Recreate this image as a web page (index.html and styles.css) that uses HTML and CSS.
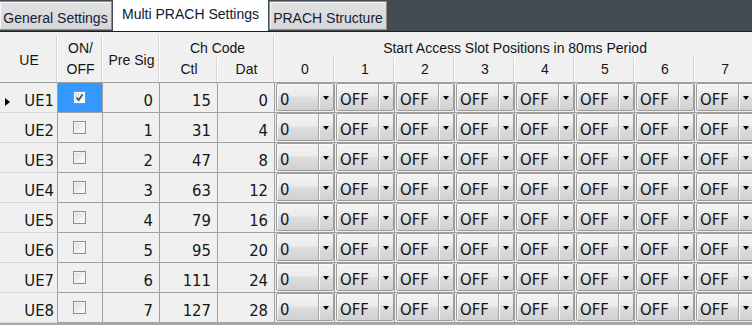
FILE: index.html
```html
<!DOCTYPE html>
<html lang="en">

<head>
  <meta charset="UTF-8">
  <title>Multi PRACH Settings</title>
  <link rel="stylesheet" href="styles.css">
</head>

<body>
  <div class="tabs">
    <div class="tab tab-general">General Settings</div>
    <div class="tab tab-multi active">Multi PRACH Settings</div>
    <div class="tab tab-struct">PRACH Structure</div>
  </div>
  <div class="rule"></div>

  <div class="grid">
    <table class="prach">
      <colgroup>
        <col class="c-ue">
        <col class="c-on">
        <col class="c-sig">
        <col class="c-ctl">
        <col class="c-dat">
        <col class="c-slot"><col class="c-slot"><col class="c-slot"><col class="c-slot">
        <col class="c-slot"><col class="c-slot"><col class="c-slot"><col class="c-slot">
      </colgroup>
      <thead>
        <tr class="h1">
          <th rowspan="2" class="tall th-ue">UE</th>
          <th rowspan="2" class="tall th-on">ON/<br>OFF</th>
          <th rowspan="2" class="tall th-sig">Pre Sig</th>
          <th colspan="2">Ch Code</th>
          <th colspan="8" class="th-slots">Start Access Slot Positions in 80ms Period</th>
        </tr>
        <tr class="h2">
          <th>Ctl</th>
          <th>Dat</th>
          <th>0</th>
          <th>1</th>
          <th>2</th>
          <th>3</th>
          <th>4</th>
          <th>5</th>
          <th>6</th>
          <th>7</th>
        </tr>
      </thead>
      <tbody id="ueBody">
        <!-- rows are built below -->
      </tbody>
    </table>
  </div>

  <script>
    const ues = [];
    for (let i = 0; i < 8; i++) {
      ues.push({
        name: "UE" + (i + 1),
        on: i === 0,
        preSig: i,
        ctl: 15 + i * 16,
        dat: i * 4,
        slots: ["0", "OFF", "OFF", "OFF", "OFF", "OFF", "OFF", "OFF"]
      });
    }

    function checkbox(on) {
      if (!on) return `<span class="cb"></span>`;
      return `<span class="cb"><svg width="11" height="11" viewBox="0 0 11 11"><path d="M2.5 5.5 L4.6 8 L8.6 2.4" fill="none" stroke="#3c4f8c" stroke-width="1.7"/></svg></span>`;
    }

    function renderRows() {
      const body = document.getElementById("ueBody");
      body.innerHTML = "";

      ues.forEach((ue, idx) => {
        const row = document.createElement("tr");
        let cells = `
          <td class="rowhead"><div class="rh"><span class="${idx === 0 ? "mark" : ""}"></span><span>${ue.name}</span></div></td>
          <td class="onoff${idx === 0 ? " selected" : ""}">${checkbox(ue.on)}</td>
          <td>${ue.preSig}</td>
          <td>${ue.ctl}</td>
          <td>${ue.dat}</td>`;
        ue.slots.forEach(slot => {
          cells += `<td class="slot"><div class="combo"><span class="val">${slot}</span><span class="drop"><i></i></span></div></td>`;
        });
        row.innerHTML = cells;
        body.appendChild(row);
      });
    }

    renderRows();
  </script>
</body>

</html>
```

FILE: styles.css
```css
body {
  margin: 0;
  width: 752px;
  height: 325px;
  overflow: hidden;
  background-color: #a9a9a9;
  font-family: "Liberation Sans", Arial, sans-serif;
}

/* tab strip */
.tabs {
  display: flex;
  align-items: flex-start;
  height: 31px;
  background-color: #434c52;
}

.tab {
  box-sizing: border-box;
  height: 29px;
  margin-top: 1px;
  padding-top: 8px;
  font-size: 14px;
  line-height: 16px;
  white-space: nowrap;
  text-align: center;
  color: #14213b;
  background: linear-gradient(#e2e2e2, #d6d6d6);
  border: 1px solid #8c8c8c;
  box-shadow: inset 1px 1px 0 #f7f7f7;
}

.tab-general {
  width: 112px;
  border-left: none;
}

.tab-multi {
  width: 155px;
  margin-left: 1px;
}

.tab-struct {
  width: 118px;
  margin-left: 1px;
}

.tab.active {
  height: 31px;
  margin-top: 0;
  padding-top: 6px;
  border: none;
  box-shadow: none;
  background: #fff;
  color: #0c1830;
}

.rule {
  height: 1px;
  background-color: #1e1e1e;
}

/* table */
.grid {
  width: 752px;
  overflow: hidden;
}

.prach {
  border-collapse: separate;
  border-spacing: 0;
  table-layout: fixed;
  width: 755px;
}

.c-ue { width: 58px; }
.c-on { width: 45px; }
.c-sig { width: 57px; }
.c-ctl { width: 58px; }
.c-dat { width: 57px; }
.c-slot { width: 60px; }

.h1 { height: 25px; }
.h2 { height: 26px; }

th {
  padding: 0 0 1px 0;
  font-weight: normal;
  font-size: 14px;
  line-height: 16px;
  color: #151515;
  text-align: center;
  vertical-align: bottom;
  white-space: nowrap;
  background:
    linear-gradient(#d4d4d4, #d4d4d4) no-repeat right 1px top 3px / 1px calc(100% - 3px),
    linear-gradient(#fff, #fff) no-repeat right 0 top 3px / 1px calc(100% - 3px),
    #f0f0f0;
}

.h2 th,
th.tall {
  padding-bottom: 5px;
  border-bottom: 1px solid #a0a0a0;
}

.h2 th {
  background:
    linear-gradient(#d4d4d4, #d4d4d4) no-repeat right 1px top 0 / 1px 100%,
    linear-gradient(#fff, #fff) no-repeat right 0 top 0 / 1px 100%,
    #f0f0f0;
}

th.th-ue,
th.th-sig {
  padding-bottom: 14px;
}

th.th-on {
  line-height: 21px;
  padding-bottom: 2px;
}

th.th-slots {
  background: #f0f0f0;
}

tbody tr {
  height: 30px;
}

td {
  padding: 0 6px 2px 0;
  font-family: "Liberation Sans Narrow", "DejaVu Sans Condensed", sans-serif;
  font-size: 16.5px;
  line-height: 18px;
  color: #161616;
  text-align: right;
  vertical-align: bottom;
  background-color: #f0f0f0;
  border-right: 1px solid #a0a0a0;
  border-bottom: 1px solid #a0a0a0;
}

td.rowhead {
  padding-right: 3px;
  border-bottom-color: #d9d9d9;
}

.rh {
  display: flex;
  justify-content: space-between;
  align-items: center;
}

.mark {
  width: 0;
  height: 0;
  margin-left: 5px;
  margin-top: 1px;
  border-top: 4px solid transparent;
  border-bottom: 4px solid transparent;
  border-left: 5px solid #000;
}

td.onoff {
  padding: 0;
  text-align: center;
  vertical-align: middle;
}

td.selected {
  background-color: #3399ff;
}

.cb {
  display: inline-block;
  box-sizing: border-box;
  width: 13px;
  height: 13px;
  margin-left: -2px;
  margin-top: -2px;
  vertical-align: middle;
  border: 1px solid #8e8f8f;
  background: linear-gradient(135deg, #d8d8d8, #f6f6f6 70%, #fff);
  box-shadow: inset 0 0 0 1px #f4f4f4;
}

.cb svg {
  display: block;
}

/* combo boxes */
td.slot {
  padding: 0 0 1px 1px;
  vertical-align: top;
}

.combo {
  box-sizing: border-box;
  display: flex;
  height: 28px;
  border: 1px solid #9b9b9b;
  border-radius: 2px;
  background: linear-gradient(#f3f3f3 0%, #ececec 45%, #dedede 52%, #d0d0d0 100%);
  box-shadow: inset 1px 1px 0 #fafafa;
}

.val {
  flex: 1;
  align-self: flex-end;
  padding: 0 0 1px 3px;
  text-align: left;
}

.drop {
  display: flex;
  align-items: center;
  justify-content: center;
  width: 14px;
  border-left: 1px solid #a6a6a6;
  box-shadow: inset 1px 0 0 #fafafa;
}

.drop i {
  width: 0;
  height: 0;
  margin-top: 1px;
  border-left: 3px solid transparent;
  border-right: 3px solid transparent;
  border-top: 4px solid #000;
}
```
